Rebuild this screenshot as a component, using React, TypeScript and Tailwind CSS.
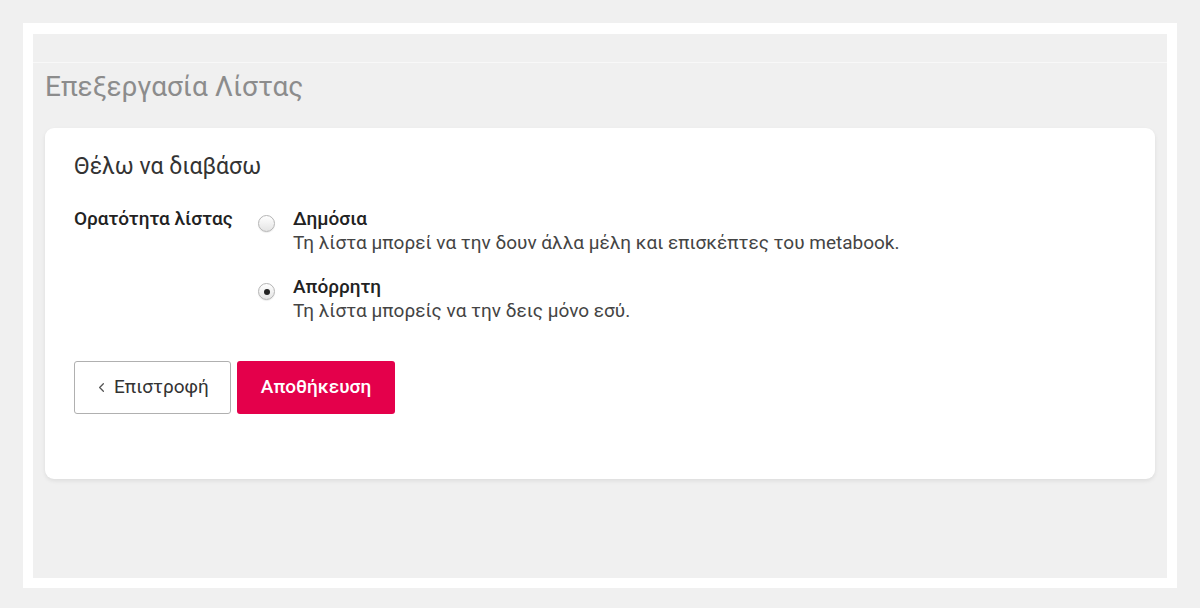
import { ChevronLeft } from "lucide-react";

const options = [
  {
    label: "Δημόσια",
    text: "Τη λίστα μπορεί να την δουν άλλα μέλη και επισκέπτες του metabook.",
    checked: false,
  },
  {
    label: "Απόρρητη",
    text: "Τη λίστα μπορείς να την δεις μόνο εσύ.",
    checked: true,
  },
];

function Radio({ checked }: { checked: boolean }) {
  return (
    <span className="mt-[8px] flex size-[17px] shrink-0 items-center justify-center rounded-full border border-[#b5b5b5] bg-gradient-to-b from-[#ffffff] to-[#e4e4e4] shadow-[0_1px_1px_rgba(0,0,0,0.08)]">
      {checked && <span className="size-[6px] rounded-full bg-[#222]" />}
    </span>
  );
}

export default function App() {
  return (
    <div className="min-h-[608px] bg-[#f0f0f0] p-[23px] pb-[20px] font-['Roboto','Liberation_Sans',sans-serif]">
      <div className="bg-white px-[10px] pt-[11px] pb-[10px]">
        <div className="h-[544px] bg-[#f0f0f0]">
          <div className="h-[29px] border-b border-[#f8f8f8]" />
          <div className="px-[12px]">
            <h1 className="mt-[8px] text-[28px] leading-[32px] font-normal text-[#8c8c8c]">
              Επεξεργασία Λίστας
            </h1>
            <div className="mt-[25px] h-[351px] rounded-[9px] bg-white px-[29px] pt-[23px] shadow-[0_2px_4px_rgba(0,0,0,0.08)]">
              <h2 className="text-[23px] leading-[32px] text-[#333]">Θέλω να διαβάσω</h2>
              <div className="mt-[24px] flex">
                <div className="w-[184px] shrink-0 text-[19px] leading-[24px] font-medium text-[#222]">
                  Ορατότητα λίστας
                </div>
                <div className="flex flex-col gap-[20px]">
                  {options.map((o) => (
                    <div key={o.label} className="flex gap-[18px]">
                      <Radio checked={o.checked} />
                      <div className="text-[19px] leading-[24px]">
                        <div className="font-medium text-[#222]">{o.label}</div>
                        <div className="text-[#444]">{o.text}</div>
                      </div>
                    </div>
                  ))}
                </div>
              </div>
              <div className="mt-[38px] flex gap-[6px]">
                <button className="flex h-[53px] w-[157px] items-center gap-[5px] rounded-[3px] border border-[#b0b0b0] bg-white pl-[19px] text-[19px] text-[#333]">
                  <ChevronLeft size={15} strokeWidth={2} className="text-[#555]" />
                  Επιστροφή
                </button>
                <button className="flex h-[53px] w-[158px] items-center justify-center rounded-[3px] bg-[#e4004b] text-[19px] font-medium text-white">
                  Αποθήκευση
                </button>
              </div>
            </div>
          </div>
        </div>
      </div>
    </div>
  );
}
